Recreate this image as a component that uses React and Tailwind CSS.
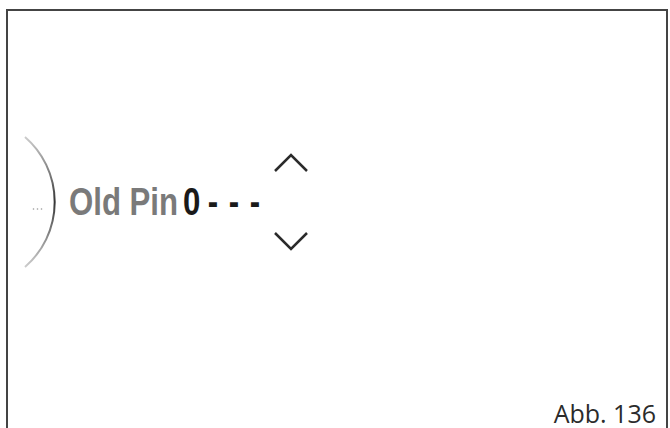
import React from 'react';

// Screen mock-up: PIN entry with rotary arc and up/down arrows
function Arc() {
  return (
    <svg width="40" height="134" viewBox="0 0 40 134" className="shrink-0">
      <defs>
        <linearGradient id="arcFade" x1="0" y1="0" x2="0" y2="1">
          <stop offset="0" stopColor="#555" stopOpacity="0.3" />
          <stop offset="0.5" stopColor="#333" stopOpacity="1" />
          <stop offset="1" stopColor="#555" stopOpacity="0.3" />
        </linearGradient>
      </defs>
      <path d="M3 2 A86 86 0 0 1 3 132" fill="none" stroke="url(#arcFade)" strokeWidth="2" />
      <circle cx="11.5" cy="74" r="0.8" fill="#999" />
      <circle cx="15.5" cy="74" r="0.8" fill="#999" />
      <circle cx="19.5" cy="74" r="0.8" fill="#999" />
    </svg>
  );
}

function Chevron({ down }) {
  return (
    <svg width="34" height="20" viewBox="0 0 34 20">
      <polyline
        points={down ? '1,2 17,18 33,2' : '1,18 17,2 33,18'}
        fill="none"
        stroke="#2b2b2b"
        strokeWidth="2.5"
      />
    </svg>
  );
}

export default function App() {
  return (
    <div className="w-[670px] h-[428px] overflow-hidden bg-white pt-[9px] pl-[6px] pr-[2px]">
      <div className="flex flex-col h-[419px] border-2 border-b-0 border-[#444]">
        <div className="flex items-center pt-[124px] pl-[14px]">
          <Arc />
          <div className="w-[205px] ml-[7px]">
            <div
              className="flex items-baseline origin-left scale-x-[0.82] whitespace-nowrap text-[38px] font-bold leading-none"
              style={{ fontFamily: '"Liberation Sans", Arial, sans-serif' }}
            >
              <span className="text-[#7a7a7a]">Old Pin</span>
              <span className="ml-[6px] text-[#1a1a1a]">0</span>
              <span className="ml-[9px] flex gap-[13px] text-[#1a1a1a]">
                <span>-</span>
                <span>-</span>
                <span>-</span>
              </span>
            </div>
          </div>
          <div className="flex flex-col items-center gap-[58px]">
            <Chevron />
            <Chevron down />
          </div>
        </div>
        <div className="mt-auto flex justify-end pr-[10px] pb-[3px]">
          <span
            className="text-[25px] text-[#2b2b2b] leading-[24px]"
            style={{ fontFamily: '"Open Sans", sans-serif' }}
          >
            Abb. 136
          </span>
        </div>
      </div>
    </div>
  );
}
